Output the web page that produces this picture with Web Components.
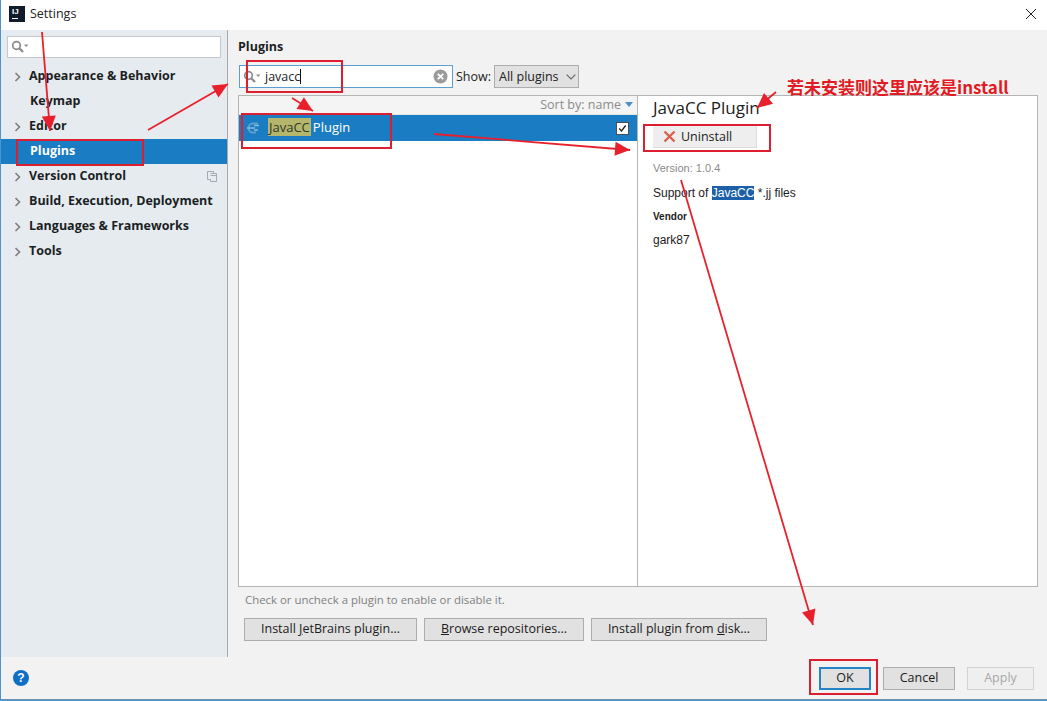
<!DOCTYPE html>
<html lang="en">
<head>
<meta charset="utf-8">
<title>Settings</title>
<style>
    html, body { margin: 0; height: 100%; overflow: hidden; }
    body { font-family: "Open Sans", "Noto Sans CJK SC", sans-serif; font-size: 12.5px; color: #1c1c1c; }
</style>
</head>
<body>
<settings-window>
    <title-bar slot="title">Settings</title-bar>
    <settings-sidebar slot="sidebar">
        <tree-item arrow>Appearance &amp; Behavior</tree-item>
        <tree-item>Keymap</tree-item>
        <tree-item arrow>Editor</tree-item>
        <tree-item selected>Plugins</tree-item>
        <tree-item arrow copy>Version Control</tree-item>
        <tree-item arrow>Build, Execution, Deployment</tree-item>
        <tree-item arrow>Languages &amp; Frameworks</tree-item>
        <tree-item arrow>Tools</tree-item>
    </settings-sidebar>
    <plugins-page slot="main"></plugins-page>
    <dialog-footer slot="footer"></dialog-footer>
</settings-window>
<red-notes></red-notes>

<script>
//window frame ###
class SettingsWindow extends HTMLElement {
    constructor(){
        super();
        this.attachShadow({ mode: "open" });
        this.shadowRoot.innerHTML = `
            <style>
                :host {
                    display: flex;
                    flex-direction: column;
                    box-sizing: border-box;
                    width: 1047px;
                    height: 701px;
                    background: #f2f2f2;
                    border-left: 1px solid #4a94cf;
                    border-bottom: 2px solid #5f93b8;
                }
                #body {
                    display: flex;
                    height: 627px;
                }
            </style>
            <slot name="title"></slot>
            <div id="body">
                <slot name="sidebar"></slot>
                <slot name="main"></slot>
            </div>
            <slot name="footer"></slot>
        `;
    }
}
customElements.define("settings-window", SettingsWindow);

class TitleBar extends HTMLElement {
    constructor(){
        super();
        this.attachShadow({ mode: "open" });
        this.shadowRoot.innerHTML = `
            <style>
                :host {
                    display: flex;
                    align-items: center;
                    box-sizing: border-box;
                    height: 30px;
                    flex: none;
                    background: #fff;
                    padding: 0 8px 3px 8px;
                    font-size: 12.5px;
                    color: #222;
                }
                #logo {
                    box-sizing: border-box;
                    width: 16px;
                    height: 16px;
                    margin-right: 5px;
                    background: #101c2c;
                    color: #fff;
                    font: bold 8px/9px "Liberation Sans", sans-serif;
                    padding: 1px 0 0 3px;
                    position: relative;
                }
                #logo i {
                    display: block;
                    width: 6px;
                    height: 1px;
                    background: #fff;
                    margin-top: 2px;
                }
                #label { flex: 1; }
                svg { display: block; margin-right: 2px; }
            </style>
            <div id="logo">IJ<i></i></div>
            <div id="label"><slot></slot></div>
            <svg width="12" height="12" viewBox="0 0 12 12"><path d="M1 1L11 11M11 1L1 11" stroke="#222" stroke-width="1" fill="none"/></svg>
        `;
    }
}
customElements.define("title-bar", TitleBar);

//sidebar ###
class SettingsSidebar extends HTMLElement {
    constructor(){
        super();
        this.attachShadow({ mode: "open" });
        this.shadowRoot.innerHTML = `
            <style>
                :host {
                    display: block;
                    box-sizing: border-box;
                    width: 227px;
                    flex: none;
                    background: #e6ebf0;
                    border-right: 1px solid #a9a9a9;
                    padding-top: 6px;
                }
                #search {
                    box-sizing: border-box;
                    display: flex;
                    align-items: center;
                    height: 22px;
                    margin: 0 6px 6px 6px;
                    background: #fff;
                    border: 1px solid #c4c8cc;
                    padding-left: 3px;
                }
            </style>
            <div id="search"><search-glyph></search-glyph></div>
            <slot></slot>
        `;
    }
}
customElements.define("settings-sidebar", SettingsSidebar);

class SearchGlyph extends HTMLElement {
    constructor(){
        super();
        this.attachShadow({ mode: "open" });
        this.shadowRoot.innerHTML = `
            <style>
                :host { display: block; width: 18px; height: 14px; flex: none; }
                svg { display: block; }
            </style>
            <svg width="18" height="14" viewBox="0 0 18 14">
                <circle cx="5.5" cy="5.5" r="3.8" fill="none" stroke="#8a8a8a" stroke-width="1.7"/>
                <path d="M8.3 8.3L12 12" stroke="#8a8a8a" stroke-width="2.2"/>
                <path d="M13 4.5h4.4l-2.2 2.6z" fill="#8a8a8a"/>
            </svg>
        `;
    }
}
customElements.define("search-glyph", SearchGlyph);

class TreeItem extends HTMLElement {
    constructor(){
        super();
        this.attachShadow({ mode: "open" });
        const arrow = this.hasAttribute("arrow")
            ? `<svg width="8" height="10" viewBox="0 0 8 10"><path d="M1.5 1L5.5 5L1.5 9" fill="none" stroke="#7d7d7d" stroke-width="1.6"/></svg>`
            : "";
        const copy = this.hasAttribute("copy")
            ? `<svg id="copy" width="10" height="11" viewBox="0 0 10 11"><path d="M.5 .5h6v2h3v8h-6v-2h-3z M3.5 2.5h3 M3.5 4.5h6v6" fill="none" stroke="#a3aab0"/></svg>`
            : "";
        this.shadowRoot.innerHTML = `
            <style>
                :host {
                    display: flex;
                    align-items: center;
                    height: 25px;
                    font-weight: 700;
                    font-size: 12.5px;
                    color: #1b1f24;
                    padding-right: 10px;
                }
                :host([selected]) {
                    background: #1a7cc3;
                    color: #fff;
                }
                :host(:not([arrow])) #arrow { width: 29px; }
                #arrow { width: 28px; flex: none; padding-left: 13px; box-sizing: border-box; display: flex; }
                #label { flex: 1; white-space: nowrap; padding-bottom: 2px; }
                #copy { display: block; }
            </style>
            <div id="arrow">${arrow}</div>
            <div id="label"><slot></slot></div>
            ${copy}
        `;
    }
}
customElements.define("tree-item", TreeItem);

//buttons ###
class IjButton extends HTMLElement {
    constructor(){
        super();
        this.attachShadow({ mode: "open" });
        this.shadowRoot.innerHTML = `
            <style>
                :host {
                    display: flex;
                    align-items: center;
                    justify-content: center;
                    box-sizing: border-box;
                    height: 23px;
                    padding-bottom: 2px;
                    background: #e1e1e1;
                    border: 1px solid #adadad;
                    color: #1c1c1c;
                    font-size: 12.5px;
                    white-space: nowrap;
                }
                :host([primary]) {
                    border: 2px solid #2484c6;
                    background: #e1e1e1;
                }
                :host([disabled]) {
                    background: #efefef;
                    border-color: #d2d2d2;
                    color: #a8a8a8;
                }
            </style>
            <slot></slot>
        `;
    }
}
customElements.define("ij-button", IjButton);

//plugins page ###
class PluginsPage extends HTMLElement {
    constructor(){
        super();
        this.attachShadow({ mode: "open" });
        this.shadowRoot.innerHTML = `
            <style>
                :host {
                    display: block;
                    flex: 1;
                    box-sizing: border-box;
                    padding: 9px 9px 0 10px;
                }
                h1 {
                    margin: 0 0 11px 0;
                    font-size: 12.5px;
                    line-height: 15px;
                    font-weight: 700;
                    color: #1b1f24;
                }
                #toolbar {
                    display: flex;
                    align-items: center;
                    height: 23px;
                    margin-bottom: 7px;
                }
                #search {
                    box-sizing: border-box;
                    display: flex;
                    align-items: center;
                    width: 214px;
                    height: 23px;
                    margin-left: 1px;
                    background: #fff;
                    border: 1px solid #5b9fd0;
                    padding: 0 4px 0 3px;
                }
                #query { flex: 1; padding-left: 4px; color: #222; display: flex; align-items: center; }
                #caret { width: 1px; height: 15px; background: #111; }
                #show { margin: 0 3px 0 3px; color: #222; }
                #select {
                    box-sizing: border-box;
                    display: flex;
                    align-items: center;
                    gap: 7px;
                    width: 85px;
                    height: 23px;
                    padding-left: 4px;
                    background: #e1e1e1;
                    border: 1px solid #adadad;
                    color: #222;
                }
                #panes {
                    display: flex;
                    box-sizing: border-box;
                    height: 492px;
                    border: 1px solid #b5b5b5;
                    background: #fff;
                }
                #list {
                    box-sizing: border-box;
                    width: 399px;
                    flex: none;
                    border-right: 1px solid #b5b5b5;
                }
                #sort {
                    box-sizing: border-box;
                    height: 19px;
                    display: flex;
                    align-items: center;
                    justify-content: flex-end;
                    gap: 4px;
                    padding: 0 4px 1px 0;
                    background: #f4f4f4;
                    border-bottom: 1px solid #e4e4e4;
                    color: #8b8b8b;
                    font-size: 12.5px;
                }
                #hint {
                    margin: 5px 0 0 7px;
                    line-height: 15px;
                    font-size: 11.4px;
                    color: #808080;
                }
                #actions {
                    display: flex;
                    gap: 7px;
                    margin: 11px 0 0 6px;
                }
            </style>
            <h1>Plugins</h1>
            <div id="toolbar">
                <div id="search">
                    <search-glyph></search-glyph>
                    <div id="query">javacc<span id="caret"></span></div>
                    <svg width="15" height="15" viewBox="0 0 15 15">
                        <circle cx="7.5" cy="7.5" r="7" fill="#9b9b9b"/>
                        <path d="M4.8 4.8L10.2 10.2M10.2 4.8L4.8 10.2" stroke="#fff" stroke-width="1.8"/>
                    </svg>
                </div>
                <span id="show">Show:</span>
                <div id="select">All plugins
                    <svg width="10" height="6" viewBox="0 0 10 6"><path d="M.7 .7L5 5L9.3 .7" fill="none" stroke="#666" stroke-width="1.1"/></svg>
                </div>
            </div>
            <div id="panes">
                <div id="list">
                    <div id="sort">Sort by: name
                        <svg width="8" height="5" viewBox="0 0 8 5"><path d="M0 0h8L4 5z" fill="#4b8fc6"/></svg>
                    </div>
                    <plugin-row>Plugin</plugin-row>
                </div>
                <plugin-details></plugin-details>
            </div>
            <div id="hint">Check or uncheck a plugin to enable or disable it.</div>
            <div id="actions">
                <ij-button style="width:173px">Install&nbsp;<u>J</u>etBrains plugin...</ij-button>
                <ij-button style="width:160px"><u>B</u>rowse repositories...</ij-button>
                <ij-button style="width:176px">Install plugin from&nbsp;<u>d</u>isk...</ij-button>
            </div>
        `;
    }
}
customElements.define("plugins-page", PluginsPage);

class PluginRow extends HTMLElement {
    constructor(){
        super();
        this.attachShadow({ mode: "open" });
        this.shadowRoot.innerHTML = `
            <style>
                :host {
                    display: flex;
                    align-items: center;
                    height: 26px;
                    background: #1a7cc3;
                    color: #fff;
                    font-size: 13px;
                    padding: 0 8px 0 6px;
                }
                #icon { display: block; margin-right: 7px; }
                mark {
                    background: #b5b56c;
                    color: #2c3a28;
                    padding: 0 1px;
                    margin-right: 2px;
                }
                #label { flex: 1; padding-bottom: 2px; }
                #check {
                    box-sizing: border-box;
                    width: 13px;
                    height: 13px;
                    background: #fff;
                    border: 1px solid #4d4d4d;
                    display: block;
                }
            </style>
            <svg id="icon" width="16" height="16" viewBox="0 0 16 16">
                <path d="M13 3.5H8a4.5 4.5 0 0 0 0 9h3" fill="none" stroke="#5f9fc9" stroke-width="2"/>
                <path d="M2 8h8M9 5.5h5M9 10h4" stroke="#8ebbd8" stroke-width="1.4"/>
            </svg>
            <div id="label"><mark>JavaCC</mark><slot></slot></div>
            <svg id="check" viewBox="0 0 13 13"><path d="M2.5 6.5L5.3 9.3L10.3 3" fill="none" stroke="#222" stroke-width="1.6"/></svg>
        `;
    }
}
customElements.define("plugin-row", PluginRow);

class PluginDetails extends HTMLElement {
    constructor(){
        super();
        this.attachShadow({ mode: "open" });
        this.shadowRoot.innerHTML = `
            <style>
                :host {
                    display: block;
                    flex: 1;
                    box-sizing: border-box;
                    padding: 1px 0 0 15px;
                    font-family: "Liberation Sans", sans-serif;
                    font-size: 12px;
                    color: #1c1c1c;
                }
                h2 {
                    margin: 0 0 6px 0;
                    font: 400 17px/22px "Open Sans", sans-serif;
                    color: #222;
                    white-space: nowrap;
                }
                #uninstall {
                    box-sizing: border-box;
                    display: flex;
                    align-items: center;
                    width: 104px;
                    height: 23px;
                    margin-bottom: 13px;
                    padding-left: 10px;
                    gap: 5px;
                    background: #eeeeee;
                    border-right: 1px solid #dcdcdc;
                    border-bottom: 1px solid #dcdcdc;
                    font: 400 12.5px "Open Sans", sans-serif;
                }
                #version { color: #8a8a8a; font-size: 11px; line-height: 15px; margin-bottom: 10px; }
                #desc { line-height: 15px; margin-bottom: 10px; }
                #desc mark { background: #1d5fa8; color: #fff; }
                #vendor { font-weight: 700; font-size: 10px; line-height: 12px; margin-bottom: 10px; }
                #name { line-height: 14px; }
            </style>
            <h2>JavaCC Plugin</h2>
            <div id="uninstall">
                <svg width="13" height="13" viewBox="0 0 13 13"><path d="M1.5 1.5L11.5 11.5M11.5 1.5L1.5 11.5" stroke="#d9604c" stroke-width="2.4"/></svg>
                Uninstall
            </div>
            <div id="version">Version: 1.0.4</div>
            <div id="desc">Support of <mark>JavaCC</mark> *.jj files</div>
            <div id="vendor">Vendor</div>
            <div id="name">gark87</div>
        `;
    }
}
customElements.define("plugin-details", PluginDetails);

//footer ###
class DialogFooter extends HTMLElement {
    constructor(){
        super();
        this.attachShadow({ mode: "open" });
        this.shadowRoot.innerHTML = `
            <style>
                :host {
                    display: flex;
                    align-items: center;
                    flex: 1;
                    padding: 0 13px 0 12px;
                    gap: 12px;
                    background: #f2f2f2;
                }
                #help {
                    width: 16px;
                    height: 16px;
                    border-radius: 50%;
                    background: #0f6fc6;
                    color: #fff;
                    font: bold 12px/16px "Liberation Sans", sans-serif;
                    text-align: center;
                    margin-right: auto;
                }
            </style>
            <div id="help">?</div>
            <ij-button primary style="width:52px">OK</ij-button>
            <ij-button style="width:72px">Cancel</ij-button>
            <ij-button disabled style="width:67px">Apply</ij-button>
        `;
    }
}
customElements.define("dialog-footer", DialogFooter);

//annotations drawn over the screenshot ###
const noteArrows = [
    [42, 32, 50, 131],
    [148, 130, 228, 84],
    [292, 98, 313, 111],
    [434, 134, 630, 150],
    [776, 92, 757, 108],
    [681, 180, 813, 625]
];
const noteBoxes = [
    [17, 140, 126, 25],
    [247, 61, 95, 31],
    [242, 114, 149, 34],
    [644, 125, 126, 26],
    [810, 660, 67, 34]
];
const arrowMarkup = ([x1, y1, x2, y2]) => {
    const angle = Math.atan2(y2 - y1, x2 - x1);
    const point = (back, side) => {
        const px = x2 - back * Math.cos(angle) - side * Math.sin(angle);
        const py = y2 - back * Math.sin(angle) + side * Math.cos(angle);
        return `${px.toFixed(1)},${py.toFixed(1)}`;
    };
    return `
        <line x1="${x1}" y1="${y1}" x2="${x2}" y2="${y2}" stroke="#e8202c" stroke-width="1.8"/>
        <polygon points="${x2},${y2} ${point(15, 7)} ${point(15, -7)}" fill="#e8202c"/>
    `;
};
class RedNotes extends HTMLElement {
    constructor(){
        super();
        this.attachShadow({ mode: "open" });
        this.shadowRoot.innerHTML = `
            <style>
                :host {
                    position: absolute;
                    left: 0;
                    top: 0;
                    width: 1047px;
                    height: 701px;
                    pointer-events: none;
                }
                svg { position: absolute; left: 0; top: 0; }
                #note {
                    position: absolute;
                    left: 787px;
                    top: 76px;
                    font: 700 17px/22px "Noto Sans CJK SC", sans-serif;
                    color: #e01b24;
                    white-space: nowrap;
                }
            </style>
            <svg width="1047" height="701" viewBox="0 0 1047 701">
                ${noteBoxes.map(([x, y, w, h]) => `<rect x="${x}" y="${y}" width="${w}" height="${h}" fill="none" stroke="#dc1f2e" stroke-width="2"/>`).join("")}
                ${noteArrows.map(arrowMarkup).join("")}
            </svg>
            <div id="note">若未安装则这里应该是install</div>
        `;
    }
}
customElements.define("red-notes", RedNotes);
</script>
</body>
</html>
